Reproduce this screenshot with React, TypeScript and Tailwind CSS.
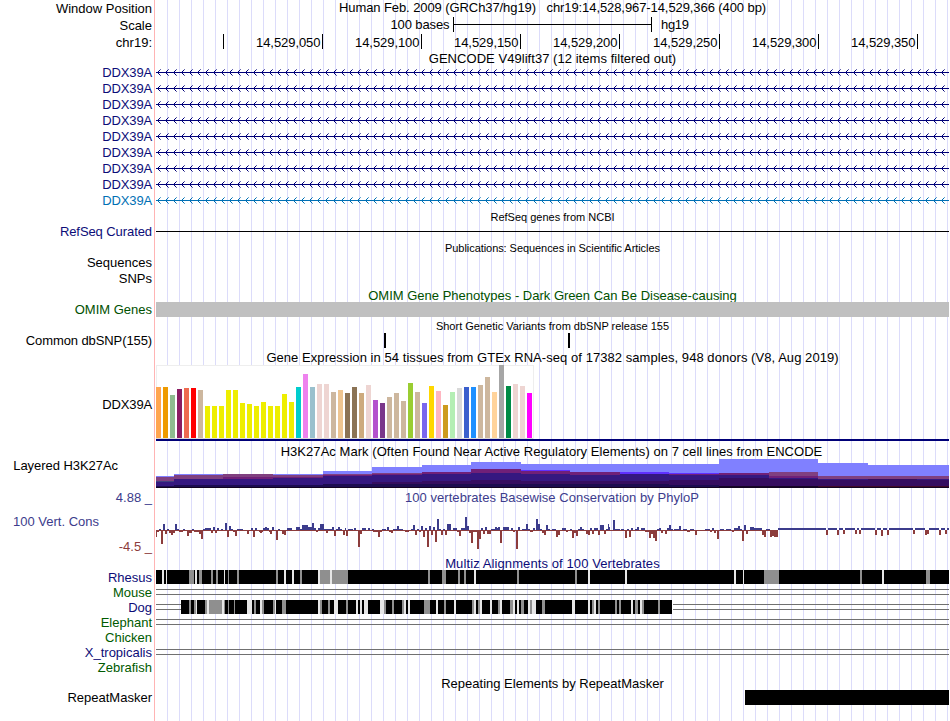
import type { ReactNode } from "react";

type Span = [number, number, number];

const BLACK = "#000000";
const NAVY = "#000078";

/* Gene expression bars: [colour, height] */
const TAN = "#cdb79e";
const YELLOW = "#eeee00";
const ROSE = "#eed5d2";
const EXPRESSION: [string, number][] = [
  ["#ffa54f", 51], ["#ee9a00", 51], ["#8fbc8f", 43], ["#8b1c62", 49], ["#ee6a50", 50], ["#ff0000", 50],
  [TAN, 48], [YELLOW, 32], [YELLOW, 32], [YELLOW, 32], [YELLOW, 48], [YELLOW, 48], [YELLOW, 35], [YELLOW, 34],
  [YELLOW, 32], [YELLOW, 36], [YELLOW, 32], [YELLOW, 32], [YELLOW, 44], [YELLOW, 36], ["#00cdcd", 51],
  ["#ee82ee", 64], ["#9ac0cd", 51], [ROSE, 54], [ROSE, 54], [TAN, 46], ["#eec591", 48], ["#8b7355", 45],
  ["#8b7355", 51], ["#cdaa7d", 45], [ROSE, 53], ["#b452cd", 38], ["#7a378b", 35], [TAN, 41], [TAN, 45],
  [TAN, 37], ["#9acd32", 55], [TAN, 46], ["#7a67ee", 35], ["#ffd700", 52], ["#ffb6c1", 47], ["#cd9b1d", 33],
  ["#b4eeb4", 46], ["#d9d9d9", 50], ["#3a5fcd", 51], ["#1e90ff", 51], [TAN, 53], [TAN, 61], ["#ffd39b", 46],
  ["#a6a6a6", 73], ["#008b45", 52], [ROSE, 54], [ROSE, 52], ["#ff00ff", 45],
];

/* Layered histone signal: x start, x end, then [colour, top] from the top down */
const LT = "#8080ff";
const MV = "#804080";
const PU = "#702078";
const VI = "#6030ff";
const IN = "#351880";
const DP = "#350d60";
const DK = "#1c0c50";
const BK = "#150428";
const HISTONE: [number, number, [string, number][]][] = [
  [156, 174, [[LT, 476], [MV, 477], ["#404080", 481], [IN, 482], [DK, 486]]],
  [174, 223, [[LT, 474], [MV, 475], [IN, 479], [DK, 485]]],
  [223, 273, [[MV, 474], [PU, 477], [IN, 479], [DK, 485]]],
  [273, 323, [[LT, 474], [MV, 475], [PU, 477], [IN, 478], [DK, 485]]],
  [323, 372, [[LT, 471], [MV, 474], [PU, 475], [IN, 476], [DK, 484]]],
  [372, 422, [[LT, 467], [MV, 473], [PU, 474], [IN, 475], [DP, 482], [DK, 484]]],
  [422, 471, [[LT, 465], [PU, 472], [IN, 474], [DP, 481], [DK, 484]]],
  [471, 521, [[LT, 462], [PU, 469], [IN, 473], [DP, 480], [DK, 484]]],
  [521, 570, [[LT, 464], [VI, 470], [PU, 471], [IN, 474], [DP, 481], [DK, 484]]],
  [570, 620, [[LT, 464], [PU, 472], [IN, 475], [DP, 481], [DK, 484]]],
  [620, 669, [[LT, 464], [VI, 472], [IN, 474], [DP, 481], [DK, 484]]],
  [669, 719, [[LT, 464], [VI, 473], [PU, 474], [IN, 475], [DP, 480], [DK, 485]]],
  [719, 769, [[LT, 459], [PU, 473], [IN, 475], [DP, 478], [BK, 486]]],
  [769, 818, [[LT, 459], [MV, 472], [PU, 476], [IN, 478], [DP, 479], [BK, 486]]],
  [818, 868, [[LT, 463], [MV, 476], [IN, 479], [DP, 480], ["#400828", 486]]],
  [868, 917, [[LT, 465], [MV, 476], [DP, 479], ["#400828", 486]]],
  [917, 949, [[LT, 465], [MV, 476], [IN, 479], [DP, 480], ["#400828", 486]]],
];

/* Conservation scores, one table per stretch: start, end (thirds of a pixel), score */
const SCORES: { origin: number; spans: Span[] }[] = [
  {
    origin: 150,
    spans: [
      [18, 21, -7], [21, 27, -2], [27, 33, 1], [33, 39, -14], [39, 45, 6], [45, 51, -4], [51, 57, 1], [57, 63, -3],
      [63, 69, -5], [69, 75, -3], [75, 81, 6], [81, 87, 1], [87, 99, -2], [99, 105, 1], [105, 111, -1],
      [111, 117, -6], [117, 126, -3], [126, 132, 1], [132, 147, -2], [147, 153, -4], [153, 159, -9],
      [159, 165, 1], [165, 183, 2], [183, 189, -3], [189, 195, 3], [195, 201, -3], [201, 207, 2], [213, 219, 1],
      [225, 231, 7], [231, 237, -7], [237, 243, 4], [243, 249, 1], [249, 255, -2], [255, 261, -6], [261, 279, 1],
      [291, 297, -4], [303, 309, 2], [309, 315, -7], [315, 321, 2], [327, 339, -2], [330, 336, -3], [339, 345, 2],
      [345, 351, 3], [351, 357, 2], [357, 360, -2], [360, 366, -4], [366, 372, 3], [378, 384, -10],
      [384, 390, 1], [396, 402, -4], [402, 408, -5], [412, 426, 2], [438, 450, 3], [450, 456, 1], [456, 474, 5],
      [474, 486, 3], [486, 492, 7], [492, 498, 2], [498, 504, -2], [504, 510, 2], [510, 522, 6], [522, 534, 1],
      [528, 534, -3], [534, 546, 1], [546, 552, 3], [552, 558, -6], [558, 564, 1], [564, 570, 3], [570, 576, 1],
      [579, 585, -5],
    ],
  },
  {
    origin: 345,
    spans: [
      [0, 3, 2], [3, 9, -6], [9, 24, 1], [27, 33, 2], [39, 45, -17], [45, 51, -4], [51, 63, 2], [69, 75, 2],
      [81, 87, 1], [84, 99, -2], [99, 105, -7], [105, 111, -2], [111, 123, 1], [126, 132, 3], [132, 138, -2],
      [138, 144, -3], [144, 156, 1], [156, 162, 4], [162, 174, 1], [180, 192, -2], [198, 204, 1], [204, 210, 5],
      [210, 216, -5], [216, 222, 1], [222, 228, -2], [228, 234, 4], [234, 240, -7], [240, 246, 2],
      [246, 252, -17], [252, 258, 4], [258, 264, -5], [264, 270, 3], [270, 276, -12], [276, 282, 11],
      [282, 288, 1], [288, 294, -5], [294, 300, 1], [300, 306, -5], [306, 318, 6], [324, 336, 2], [336, 342, -2],
      [342, 348, -6], [348, 360, 2], [360, 366, 13], [366, 372, 4], [372, 378, -3], [378, 384, -13],
      [384, 396, -2], [396, 402, -19], [402, 408, -9], [408, 414, 2], [414, 420, -4], [420, 426, 3],
      [426, 438, -4], [438, 450, 1], [450, 456, 3], [456, 459, 2], [459, 465, 3], [465, 471, -13], [474, 492, 3],
      [498, 504, 2], [504, 510, -2], [513, 519, -19], [519, 525, 3], [531, 543, 1], [543, 549, 6], [549, 555, 1],
      [555, 564, -2], [564, 570, 2], [573, 579, 11], [579, 585, 6],
    ],
  },
  {
    origin: 540,
    spans: [
      [0, 6, 1], [6, 12, -3], [12, 18, -5], [18, 24, 5], [24, 30, 1], [36, 48, 1], [48, 54, -7], [54, 60, -5],
      [66, 78, 2], [78, 84, -2], [90, 96, 1], [96, 102, -8], [102, 108, -3], [108, 114, -6], [114, 120, 1],
      [120, 126, 3], [126, 132, 1], [138, 144, -4], [144, 150, -5], [150, 156, 2], [156, 162, -4], [162, 174, 2],
      [174, 180, -5], [180, 192, 5], [192, 198, -4], [198, 204, 1], [204, 207, 6], [207, 210, 3], [219, 225, 10],
      [225, 240, 1], [243, 252, 1], [255, 261, -8], [261, 267, 1], [267, 273, -7], [273, 279, 2], [285, 291, 1],
      [291, 297, 3], [303, 315, 2], [315, 327, -2], [327, 333, -8], [333, 339, -4], [339, 345, -8],
      [345, 351, -11], [351, 357, 1], [357, 363, 2], [363, 369, -3], [375, 381, -4], [381, 387, 2], [387, 393, 5],
      [393, 399, 1], [402, 417, 1], [417, 423, 4], [429, 441, 1], [441, 450, -2], [450, 462, 1], [465, 471, -5],
      [495, 510, 1], [510, 516, -2], [516, 522, 2], [522, 528, -3], [531, 537, -9], [540, 552, 1], [558, 573, 1],
      [576, 582, -2], [582, 594, 2], [594, 600, 4],
    ],
  },
  {
    origin: 740,
    spans: [
      [0, 6, 1], [6, 12, -11], [12, 18, 5], [18, 24, -4], [30, 42, 3], [42, 66, 2], [66, 72, -5], [72, 78, -7],
      [78, 90, 1], [90, 96, -7], [96, 102, -6], [102, 114, -7], [114, 258, 2], [258, 264, -5], [264, 291, 2],
      [291, 297, -5], [297, 309, 2], [309, 315, -4], [315, 345, 2], [345, 351, -4], [351, 357, 2],
      [357, 363, -4], [363, 405, 2], [405, 411, -5], [411, 423, 2], [423, 429, -6], [429, 441, 2],
      [441, 447, -5], [447, 519, 2], [519, 525, -4], [525, 555, 2], [555, 561, -5], [561, 567, -4],
      [567, 597, 2], [597, 603, -5], [603, 615, 2], [615, 621, -4], [621, 627, 2],
    ],
  },
];

/* Alignment gaps: start, end (thirds of a pixel), 1 = grey, 2 = pale */
const RHESUS: { origin: number; spans: Span[] }[] = [
  {
    origin: 150,
    spans: [
      [36, 42, 2], [48, 51, 2], [117, 132, 1], [135, 141, 2], [147, 156, 1], [183, 189, 1], [198, 204, 1],
      [222, 225, 2], [234, 237, 1], [261, 267, 1], [378, 384, 1], [402, 408, 2], [426, 432, 2], [450, 456, 1],
      [504, 510, 2], [510, 540, 1], [540, 546, 2], [546, 594, 1],
    ],
  },
  { origin: 345, spans: [[249, 255, 1], [291, 303, 1], [339, 345, 1], [357, 363, 1], [387, 393, 2], [516, 522, 1]] },
  { origin: 540, spans: [[105, 111, 1], [144, 150, 2], [255, 261, 2], [582, 588, 2], [609, 612, 2]] },
  { origin: 740, spans: [[9, 12, 2], [72, 117, 1], [360, 366, 1], [426, 432, 2], [558, 570, 1]] },
];

const DOG: { origin: number; spans: Span[] }[] = [
  {
    origin: 150,
    spans: [
      [117, 123, 1], [132, 138, 1], [138, 141, 2], [165, 171, 1], [171, 177, 2], [177, 216, 1], [216, 222, 2],
      [222, 225, 1], [234, 237, 1], [252, 255, 1], [291, 306, 2], [312, 318, 1], [330, 336, 2], [336, 342, 1],
      [369, 375, 1], [375, 378, 2], [396, 408, 1], [504, 510, 2], [510, 516, 1], [534, 540, 1], [552, 564, 2],
      [588, 594, 1],
    ],
  },
  {
    origin: 345,
    spans: [
      [33, 39, 2], [45, 51, 2], [57, 69, 2], [105, 117, 2], [117, 123, 1], [141, 147, 1], [171, 177, 1],
      [177, 183, 2], [189, 195, 2], [237, 255, 1], [273, 279, 2], [297, 303, 1], [327, 333, 2], [381, 387, 1],
      [387, 393, 2], [399, 405, 1], [405, 411, 2], [435, 441, 2], [459, 465, 1], [465, 471, 2], [495, 504, 1],
      [504, 510, 2], [516, 522, 2], [528, 537, 1], [549, 555, 2], [555, 561, 1], [561, 573, 2],
    ],
  },
  {
    origin: 540,
    spans: [
      [6, 15, 1], [96, 105, 2], [144, 150, 2], [156, 162, 1], [162, 168, 2], [174, 180, 1], [225, 231, 1],
      [237, 243, 1], [273, 279, 2], [285, 294, 1], [300, 306, 2], [306, 312, 1], [354, 360, 1],
    ],
  },
];

/* Drawing surface of a track; its x axis is the browser image's, from 155 to 950 */
function Plot({ top = 0, height, children }: { top?: number; height: number; children: ReactNode }) {
  return (
    <svg
      className="block shrink-0"
      width={795}
      height={height}
      viewBox={`155 ${top} 795 ${height}`}
      shapeRendering="crispEdges"
    >
      {children}
    </svg>
  );
}

function Row({ h, label, className = "", children }: { h: string; label?: ReactNode; className?: string; children?: ReactNode }) {
  return (
    <div className={`flex w-[950px] shrink-0 ${h}`}>
      <div className={`flex w-[154px] shrink-0 items-center justify-end whitespace-pre pr-[2px] ${className}`}>{label}</div>
      <div className="flex w-[796px] shrink-0 items-center justify-center whitespace-pre border-l border-[#ffb4b4] bg-[repeating-linear-gradient(90deg,#dcdcfa_0_1px,transparent_1px_12px)] bg-[position:12px_0] bg-no-repeat">
        {children}
      </div>
    </div>
  );
}

function ArrowLine({ color }: { color: string }) {
  const tips = Array.from({ length: 99 }, (_, i) => 157 + i * 8);
  return (
    <Plot height={16}>
      <rect x={156} y={8} width={793} height={1} fill={color} />
      {tips.map((x) => (
        <g key={x} fill={color}>
          <rect x={x + 1} y={7} width={1} height={3} />
          <rect x={x + 2} y={6} width={1} height={1} />
          <rect x={x + 2} y={10} width={1} height={1} />
          <rect x={x + 3} y={5} width={1} height={1} opacity={0.6} />
          <rect x={x + 3} y={11} width={1} height={1} opacity={0.6} />
        </g>
      ))}
    </Plot>
  );
}

function Gaps({ data }: { data: { origin: number; spans: Span[] }[] }) {
  return (
    <>
      {data.flatMap(({ origin, spans }) =>
        spans.map(([a, b, kind]) => (
          <rect
            key={`${origin}-${a}`}
            x={origin + a / 3}
            y={0}
            width={(b - a) / 3}
            height={14}
            fill={kind === 1 ? "#8f8f8f" : "#e6e6e6"}
          />
        )),
      )}
    </>
  );
}

function DoubleLine({ from = 156, to = 949 }: { from?: number; to?: number }) {
  return (
    <g fill="#707070">
      <rect x={from} y={4} width={to - from} height={1} />
      <rect x={from} y={9} width={to - from} height={1} />
    </g>
  );
}

const TICKS = [
  { x: 322, text: "14,529,050" },
  { x: 421, text: "14,529,100" },
  { x: 520, text: "14,529,150" },
  { x: 619, text: "14,529,200" },
  { x: 719, text: "14,529,250" },
  { x: 818, text: "14,529,300" },
  { x: 917, text: "14,529,350" },
];

export default function App() {
  return (
    <div className="flex h-[721px] w-[950px] flex-col overflow-hidden bg-white font-['Liberation_Sans',Arial,sans-serif] text-[13px] leading-[15px] text-black">
      <Row h="h-[17px]" label="Window Position">
        <span className="pb-[3px] tracking-[-0.085px]">Human Feb. 2009 (GRCh37/hg19)   chr19:14,528,967-14,529,366 (400 bp)</span>
      </Row>
      <Row h="h-[17px]" label="Scale">
        <Plot height={17}>
          <g fill={BLACK}>
            <rect x={453} y={0} width={1} height={15} />
            <rect x={651} y={0} width={1} height={15} />
            <rect x={453} y={7} width={199} height={1} />
            <text x={390.5} y={12} fontSize={13} textLength={59}>100 bases</text>
            <text x={661} y={12} fontSize={13} textLength={28}>hg19</text>
          </g>
        </Plot>
      </Row>
      <Row h="h-[16px]" label="chr19:">
        <Plot height={16}>
          <rect x={223} y={0} width={1} height={15} fill={BLACK} />
          {TICKS.map((t) => (
            <g key={t.x} fill={BLACK}>
              <rect x={t.x} y={0} width={1} height={15} />
              <text x={t.x - 66} y={13} fontSize={13} textLength={64.5}>{t.text}</text>
            </g>
          ))}
        </Plot>
      </Row>
      <Row h="h-[14px]">
        <span className="pt-[3px] tracking-[0.045px]">GENCODE V49lift37 (12 items filtered out)</span>
      </Row>
      {Array.from({ length: 8 }, (_, i) => (
        <Row key={i} h="h-[16px]" label="DDX39A" className="pt-px tracking-[-0.15px] text-[#0c0c78]">
          <ArrowLine color={NAVY} />
        </Row>
      ))}
      <Row h="h-[16px]" label="DDX39A" className="pt-px tracking-[-0.15px] text-[#0070b4]">
        <ArrowLine color="#0070b4" />
      </Row>
      <Row h="h-[16px]">
        <span className="pt-[2px] text-[11px]">RefSeq genes from NCBI</span>
      </Row>
      <Row h="h-[16px]" label="RefSeq Curated" className="pb-[2px] tracking-[-0.08px] text-[#0c0c78]">
        <Plot height={16}>
          <rect x={156} y={7} width={793} height={1} fill="#000000" />
        </Plot>
      </Row>
      <Row h="h-[15px]">
        <span className="pt-px text-[11px] tracking-[-0.06px]">Publications: Sequences in Scientific Articles</span>
      </Row>
      <Row h="h-[16px]" label="Sequences" className="pb-[2px]" />
      <Row h="h-[16px]" label="SNPs" className="pb-[2px]" />
      <Row h="h-[15px]">
        <span className="pt-px text-[#005000]">OMIM Gene Phenotypes - Dark Green Can Be Disease-causing</span>
      </Row>
      <Row h="h-[16px]" label="OMIM Genes" className="pb-[2px] text-[#005000]">
        <Plot height={16}>
          <rect x={156} y={0} width={793} height={15} fill="#c0c0c0" />
        </Plot>
      </Row>
      <Row h="h-[15px]">
        <span className="pt-px text-[11px]">Short Genetic Variants from dbSNP release 155</span>
      </Row>
      <Row h="h-[16px]" label="Common dbSNP(155)" className="pb-[2px] tracking-[-0.1px]">
        <Plot height={16}>
          <rect x={384} y={0} width={2} height={15} fill={BLACK} />
          <rect x={568} y={0} width={2} height={15} fill={BLACK} />
        </Plot>
      </Row>
      <Row h="h-[16px]">
        <span className="pt-px tracking-[0.055px]">Gene Expression in 54 tissues from GTEx RNA-seq of 17382 samples, 948 donors (V8, Aug 2019)</span>
      </Row>
      <Row h="h-[76px]" label="DDX39A" className="pt-[3px] tracking-[-0.15px]">
        <Plot top={365} height={76}>
          <rect x={156} y={365} width={378} height={74} fill="#eeeeee" />
          <rect x={157} y={366} width={376} height={72} fill="#ffffff" />
          <rect x={156} y={438} width={377} height={1} fill="#d9d9d9" />
          {EXPRESSION.map(([fill, h], i) => (
            <rect key={i} x={156 + i * 7} y={438 - h} width={5} height={h} fill={fill} />
          ))}
          <rect x={156} y={439} width={793} height={2} fill={NAVY} />
        </Plot>
      </Row>
      <Row h="h-[18px]">
        <span className="pt-[3px] pr-[2px] tracking-[0.048px]">H3K27Ac Mark (Often Found Near Active Regulatory Elements) on 7 cell lines from ENCODE</span>
      </Row>
      <Row h="h-[31px]" label="Layered H3K27Ac" className="pr-[36px] pb-[19px] tracking-[-0.05px]">
        <Plot top={459} height={31}>
          {HISTONE.map(([x0, x1, layers]) =>
            layers.map(([fill, y]) => <rect key={`${x0}-${y}`} x={x0} y={y} width={x1 - x0} height={488 - y} fill={fill} />),
          )}
          <rect x={156} y={487} width={793} height={1} fill="#120420" />
        </Plot>
      </Row>
      <Row h="h-[15px]" label="4.88 _" className="text-[#3c3c8c]">
        <span className="pr-px tracking-[0.04px] text-[#3c3c8c]">100 vertebrates Basewise Conservation by PhyloP</span>
      </Row>
      <Row
        h="h-[52px]"
        className="text-[#3c3c8c]"
        label={
          <span className="flex w-full flex-col gap-[10px] pl-[13px] pt-[6px]">
            <span>100 Vert. Cons</span>
            <span className="self-end text-[#8c3c3c]">-4.5 _</span>
          </span>
        }
      >
        <Plot top={505} height={52}>
          <rect x={156} y={530} width={622} height={1} fill="#8c3c3c" />
          {SCORES.flatMap(({ origin, spans }) =>
            spans.map(([a, b, v]) => (
              <rect
                key={`${origin}-${a}-${v}`}
                x={origin + a / 3}
                y={v > 0 ? 530 - v : 530}
                width={(b - a) / 3}
                height={Math.abs(v)}
                fill={v > 0 ? "#3c3c8c" : "#8c3c3c"}
              />
            )),
          )}
        </Plot>
      </Row>
      <Row h="h-[13px]">
        <span className="tracking-[0.1px] text-[#0c0c78]">Multiz Alignments of 100 Vertebrates</span>
      </Row>
      <Row h="h-[15px]" label="Rhesus" className="text-[#0c0c78]">
        <Plot height={15}>
          <rect x={156} y={0} width={793} height={14} fill={BLACK} />
          <Gaps data={RHESUS} />
        </Plot>
      </Row>
      <Row h="h-[15px]" label="Mouse" className="text-[#005a00]">
        <Plot height={15}>
          <DoubleLine />
        </Plot>
      </Row>
      <Row h="h-[15px]" label="Dog" className="text-[#0c0c78]">
        <Plot height={15}>
          <DoubleLine to={181} />
          <DoubleLine from={673} />
          <rect x={181} y={0} width={491} height={14} fill={BLACK} />
          <Gaps data={DOG} />
        </Plot>
      </Row>
      <Row h="h-[15px]" label="Elephant" className="text-[#005a00]">
        <Plot height={15}>
          <DoubleLine />
        </Plot>
      </Row>
      <Row h="h-[15px]" label="Chicken" className="text-[#005a00]" />
      <Row h="h-[15px]" label="X_tropicalis" className="text-[#0c0c78]">
        <Plot height={15}>
          <DoubleLine />
        </Plot>
      </Row>
      <Row h="h-[15px]" label="Zebrafish" className="text-[#005a00]" />
      <Row h="h-[15px]">
        <span className="pt-px">Repeating Elements by RepeatMasker</span>
      </Row>
      <Row h="h-[16px]" label="RepeatMasker" className="pb-[2px]">
        <Plot height={16}>
          <rect x={745} y={0} width={204} height={15} fill={BLACK} />
        </Plot>
      </Row>
      <Row h="h-[15px]" />
    </div>
  );
}
